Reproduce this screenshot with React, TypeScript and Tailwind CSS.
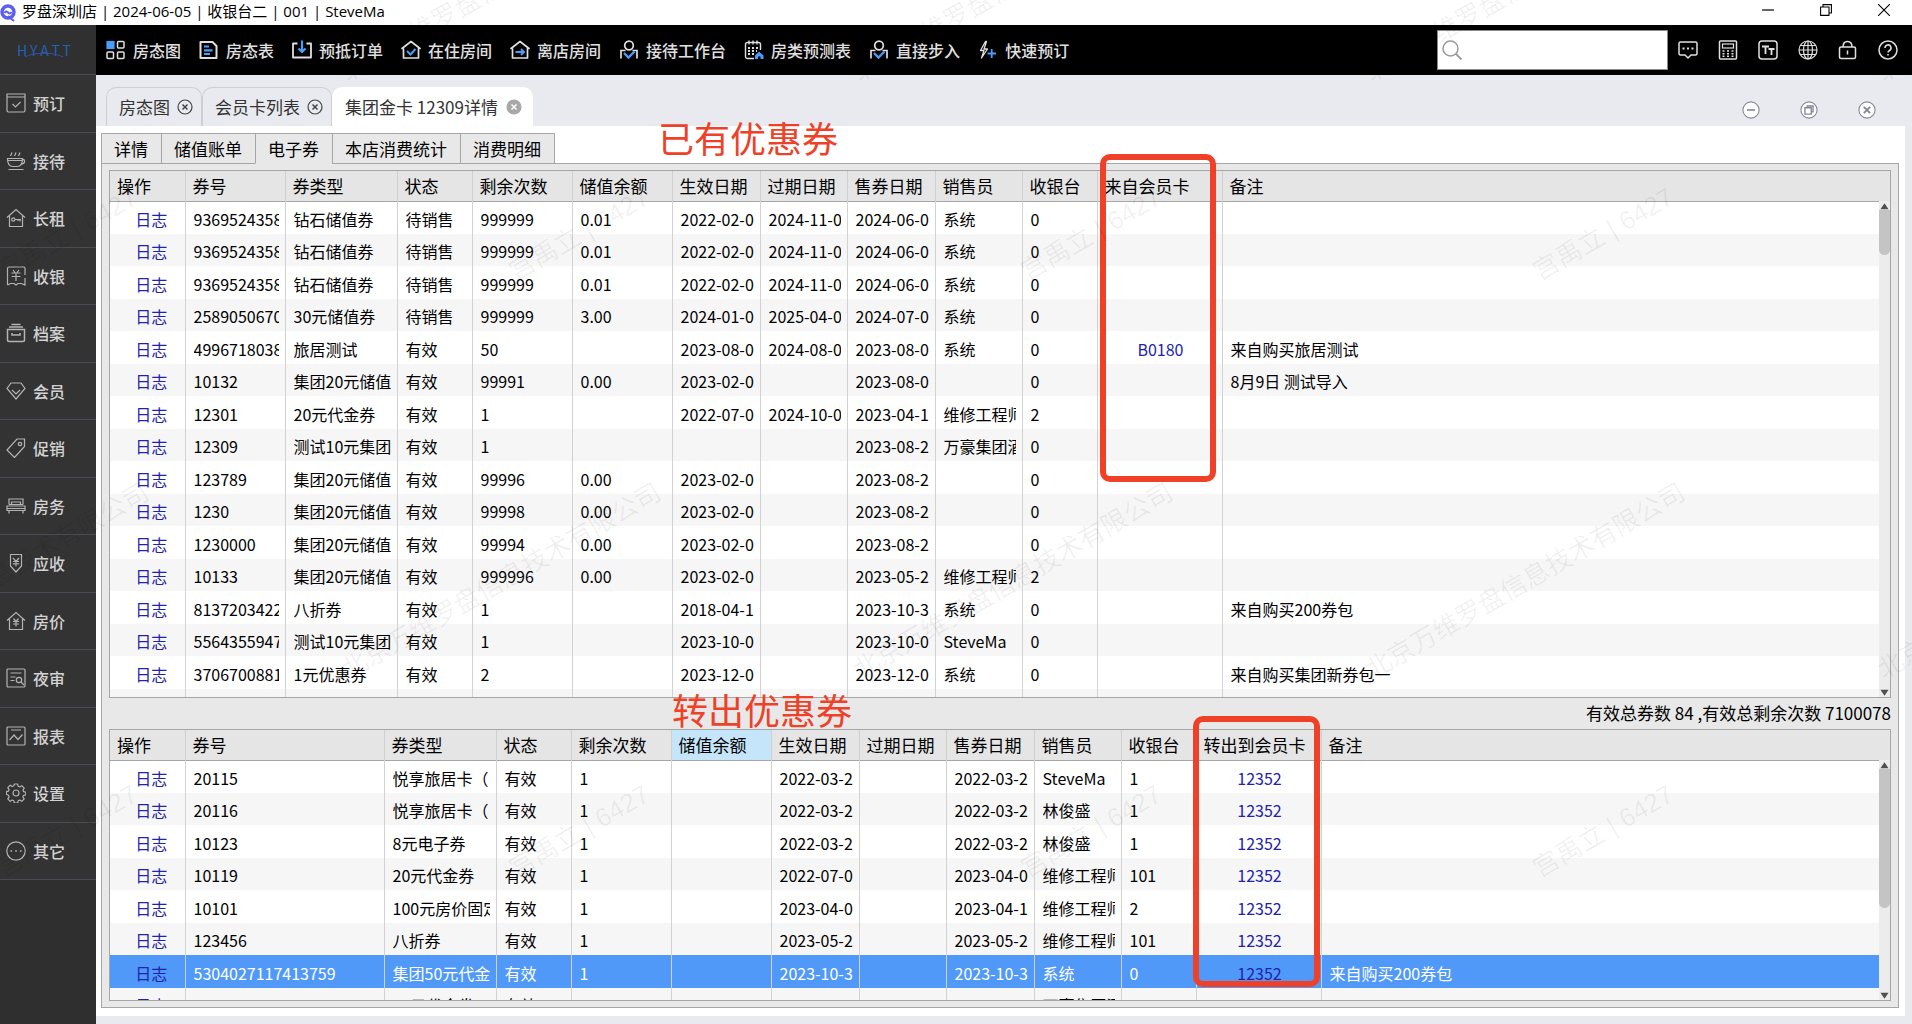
import type { ReactNode } from 'react'

const BLUE = '#4a9df8'

function Svg({ children, className = 'w-5 h-5' }: { children: ReactNode; className?: string }) {
  return (
    <svg viewBox="0 0 20 20" fill="none" stroke="currentColor" strokeWidth="1.2" aria-hidden="true"
      className={`shrink-0 ${className}`}>
      {children}
    </svg>
  )
}

const personIcon = (
  <>
    <circle cx="10" cy="5.500" r="4.300" strokeWidth="1.700" />
    <path d="M6.500 10.500H2v8M13.500 10.500H18v8" strokeWidth="1.700" />
    <path d="M5 13l4.500 4.500 6-6" stroke={BLUE} strokeWidth="2.400" />
  </>
)

const toolbar = [
  { label: '房态图', icon: <>
    <rect x="1" y="1.500" width="7" height="7" fill={BLUE} stroke={BLUE} />
    <rect x="11.500" y="1.500" width="6.500" height="6.500" rx="1" strokeWidth="1.5" />
    <rect x="1" y="12" width="6.500" height="6.500" rx="1" strokeWidth="1.5" />
    <rect x="11.500" y="12" width="6.500" height="6.500" rx="1" strokeWidth="1.5" />
  </> },
  { label: '房态表', icon: <>
    <path d="M1.500 2h12l4 4v12h-16z" strokeWidth="2" strokeLinejoin="round" />
    <path d="M5 6.500h5M5 10.300h8.500M5 14h6" stroke={BLUE} strokeWidth="2.200" />
  </> },
  { label: '预抵订单', icon: <>
    <path d="M5.500 3.500H1v14h18v-14h-4.500" strokeWidth="1.800" strokeLinejoin="round" />
    <path d="M10 0.500v11.500M6.500 8.500l3.500 3.500 3.500-3.500" stroke={BLUE} strokeWidth="2.200" />
  </> },
  { label: '在住房间', icon: <>
    <path d="M2.500 18V8.500H1L10 1.500l9 7h-1.500V18z" strokeWidth="1.700" strokeLinejoin="round" />
    <path d="M6 11l3.500 3.500 5-5.500" stroke={BLUE} strokeWidth="2" />
  </> },
  { label: '离店房间', icon: <>
    <path d="M2.500 18V8.500H1L10 1.500l9 7h-1.500V18z" strokeWidth="1.700" strokeLinejoin="round" />
    <path d="M5.500 12h8.500M11 9l3 3-3 3" stroke={BLUE} strokeWidth="2" />
  </> },
  { label: '接待工作台', icon: personIcon },
  { label: '房类预测表', icon: <>
    <path d="M10 18.500H3.500a2 2 0 0 1-2-2V4.500a2 2 0 0 1 2-2h11a2 2 0 0 1 2 2V10" strokeWidth="1.4" />
    <path d="M5 0.500v4M9 0.500v4M13 0.500v4" strokeWidth="1.4" />
    <path d="M4 8h2M8 8h2M12 8h2M4 11h2M8 11h2M12 11h1M4 14h2M8 14h2" strokeWidth="1.8" />
    <path d="M15 11.500l4.500 4V19h-3v-2.500h-2.500V19H11v-3.500z" fill={BLUE} stroke="none" />
  </> },
  { label: '直接步入', icon: personIcon },
  { label: '快速预订', icon: <>
    <path d="M7.500 1.500L2.500 10.500h3.500L3.500 18l6-9H6l2.500-7.500z" strokeWidth="1.3" strokeLinejoin="round" />
    <path d="M9.500 13.500h8.500M13.700 9v9" stroke={BLUE} strokeWidth="1.8" />
  </> },
]

const tools = [
  { label: '消息', icon: <>
    <path d="M2.500 2h15a1.500 1.500 0 0 1 1.500 1.500v10a1.500 1.500 0 0 1-1.500 1.500H13l-3 3-3-3H2.500A1.500 1.500 0 0 1 1 13.500v-10A1.500 1.500 0 0 1 2.500 2z" strokeWidth="1.5" />
    <path d="M4.500 8.500h2M9 8.500h2M13.500 8.500h2" strokeWidth="2" />
  </> },
  { label: '计算器', icon: <>
    <rect x="1.500" y="1" width="17" height="18" rx="1" strokeWidth="1.5" />
    <rect x="4.500" y="4" width="11" height="4" />
    <path d="M4.500 11h2M9 11h2M13.500 11h2M4.500 13.700h2M9 13.700h2M13.500 13.700h2M4.500 16.300h2M9 16.300h2M13.500 16.300h2" strokeWidth="1.500" />
  </> },
  { label: '字体', icon: <>
    <rect x="1" y="1" width="18" height="18" rx="3" strokeWidth="1.5" />
    <path d="M4 6.500h7M7.500 6.500v7.500M10.500 9h6M13.500 9v6" strokeWidth="1.800" />
  </> },
  { label: '语言', icon: <>
    <circle cx="10" cy="10" r="9" />
    <ellipse cx="10" cy="10" rx="4.500" ry="9" />
    <path d="M10 1v18M1 10h18M2.500 5.500h15M2.500 14.500h15" />
  </> },
  { label: '锁屏', icon: <>
    <rect x="1.500" y="7" width="16" height="11.500" rx="1.500" strokeWidth="1.5" />
    <path d="M5 7C5 3.500 7 1.500 9.500 1.500S14 3.500 14 7M9.500 10.500v4" strokeWidth="1.5" />
  </> },
  { label: '帮助', icon: <>
    <circle cx="10" cy="10" r="9" strokeWidth="1.5" />
    <path d="M7 8a3 3 0 1 1 4.500 2.500c-1 .6-1.500 1-1.500 2M10 14v1.500" strokeWidth="1.500" />
  </> },
]

const sidebar = [
  { label: '预订', icon: <path d="M1 1h18v16.500a1.500 1.500 0 0 1-1.500 1.500h-15A1.500 1.500 0 0 1 1 17.500zM1 4h18M6.500 11l3 3 5-5" /> },
  { label: '接待', icon: <path d="M6 1.500L4.500 5M10 1.500L8.500 5M14 1.500L12.500 5M1.500 7.500h15c0 5-2 8-5.500 8H7c-3.500 0-5.500-3-5.500-8zM2 9.500h14M16.500 8.500c3-.5 3 4.500-1.500 4.500M2.500 18.500h15" /> },
  { label: '长租', icon: <>
    <path d="M1 9.500l9-8 9 8M3.500 8v10.500h13V8" />
    <path d="M9 11.500h6M14 11.500v2M12 11.500v1.500" /><circle cx="7.300" cy="11.500" r="1.600" />
  </> },
  { label: '收银', icon: <path d="M1.500 19V2.500A1.500 1.500 0 0 1 3 1h14.500A1.500 1.500 0 0 1 19 2.500V9M19 12v7l-3.500-1.500H12l-2 1.500-2-1.500H4.500L1.500 19M7 4l2 2.500M13 4l-2 2.500M5.500 7h9M5.500 10.500h9M10 7v8" /> },
  { label: '档案', icon: <path d="M1.500 6.500h17V17a1.500 1.500 0 0 1-1.500 1.500H3A1.500 1.500 0 0 1 1.500 17zM3 4h14M5.500 1.500h9M6 10v2h8v-2" strokeWidth="1.500" /> },
  { label: '会员', icon: <path d="M5 2h10l4 5.500-9 10.500-9-10.500zM6 9l4 4 4-4" /> },
  { label: '促销', icon: <><path d="M11 1h7.500v7.500L8.500 19.500 1 12z" /><circle cx="14" cy="6" r="1.700" /></> },
  { label: '房务', icon: <path d="M3 8.500V3h14v5.500M1 14.500v-4.500h18v4.500zM3 14.500v3M17 14.500v3M5.500 8V6h9v2M1 12.500h18M3 8.500h14" /> },
  { label: '应收', icon: <path d="M4.500 1.500h11V13L10 19l-5.500-6zM7 5l3 3.500L13 5M7 8.500h6M7 10.800h6M10 8.500v5" /> },
  { label: '房价', icon: <path d="M1 9.500l9-8 9 8M3.500 8v10.500h13V8M7.500 7.500l2.500 3 2.500-3M7 10.500h6M7 13h6M10 10.500v5" /> },
  { label: '夜审', icon: <><rect x="1" y="1" width="18" height="18" rx="1" /><path d="M4.500 5h11M4.500 9h5M4.500 12.500h4M15 14l3 3" /><circle cx="13" cy="12" r="2.700" /></> },
  { label: '报表', icon: <><rect x="1" y="1" width="18" height="18" rx="1" /><path d="M5 4h10M3.500 14l4.500-5 4 4.500 4.500-5" /></> },
  { label: '设置', icon: <>
    <circle cx="10" cy="10" r="3" />
    <path d="M8.300 1h3.400l.5 2.300 1.600.7 2-1.300 2.400 2.400-1.300 2 .7 1.600 2.200.5v2.600l-2.200.5-.7 1.600 1.300 2-2.400 2.400-2-1.300-1.600.7-.5 2.300H8.300l-.5-2.300-1.600-.7-2 1.300-2.400-2.400 1.300-2-.7-1.600L.4 11.300V8.700l2-.5.700-1.600-1.300-2 2.400-2.400 2 1.300 1.600-.7z" strokeLinejoin="round" />
  </> },
  { label: '其它', icon: <><circle cx="10" cy="10" r="9.200" /><path d="M4.500 10h1.600M9.200 10h1.600M13.900 10h1.600" strokeWidth="1.600" /></> },
]

const subTabs = ['详情', '储值账单', '电子券', '本店消费统计', '消费明细']

type Col = { title: string; cls: string; link?: boolean; hot?: boolean }

const commonCols: Col[] = [
  { title: '券类型', cls: 'w-[112px]' },
  { title: '状态', cls: 'w-[75px]' },
  { title: '剩余次数', cls: 'w-[100px]' },
]

const dateCols: Col[] = [
  { title: '生效日期', cls: 'w-[88px]' },
  { title: '过期日期', cls: 'w-[87px]' },
  { title: '售券日期', cls: 'w-[88px]' },
  { title: '销售员', cls: 'w-[87px]' },
  { title: '收银台', cls: 'w-[75px]' },
]

const ownedCols: Col[] = [
  { title: '操作', cls: 'w-[75px]', link: true },
  { title: '券号', cls: 'w-[100px]' },
  ...commonCols,
  { title: '储值余额', cls: 'w-[100px]' },
  ...dateCols,
  { title: '来自会员卡', cls: 'w-[125px]', link: true },
  { title: '备注', cls: '' },
]

const movedCols: Col[] = [
  { title: '操作', cls: 'w-[75px]', link: true },
  { title: '券号', cls: 'w-[199px]' },
  ...commonCols,
  { title: '储值余额', cls: 'w-[100px]', hot: true },
  ...dateCols,
  { title: '转出到会员卡', cls: 'w-[125px]', link: true },
  { title: '备注', cls: '' },
]

const ownedRows = [
  ['日志', '93695243580', '钻石储值券', '待销售', '999999', '0.01', '2022-02-01', '2024-11-01', '2024-06-01', '系统', '0', '', ''],
  ['日志', '93695243580', '钻石储值券', '待销售', '999999', '0.01', '2022-02-01', '2024-11-01', '2024-06-01', '系统', '0', '', ''],
  ['日志', '93695243580', '钻石储值券', '待销售', '999999', '0.01', '2022-02-01', '2024-11-01', '2024-06-01', '系统', '0', '', ''],
  ['日志', '25890506700', '30元储值券', '待销售', '999999', '3.00', '2024-01-01', '2025-04-01', '2024-07-01', '系统', '0', '', ''],
  ['日志', '49967180380', '旅居测试', '有效', '50', '', '2023-08-01', '2024-08-01', '2023-08-01', '系统', '0', 'B0180', '来自购买旅居测试'],
  ['日志', '10132', '集团20元储值', '有效', '99991', '0.00', '2023-02-01', '', '2023-08-01', '', '0', '', '8月9日 测试导入'],
  ['日志', '12301', '20元代金券', '有效', '1', '', '2022-07-01', '2024-10-01', '2023-04-11', '维修工程师', '2', '', ''],
  ['日志', '12309', '测试10元集团', '有效', '1', '', '', '', '2023-08-21', '万豪集团酒', '0', '', ''],
  ['日志', '123789', '集团20元储值', '有效', '99996', '0.00', '2023-02-01', '', '2023-08-21', '', '0', '', ''],
  ['日志', '1230', '集团20元储值', '有效', '99998', '0.00', '2023-02-01', '', '2023-08-21', '', '0', '', ''],
  ['日志', '1230000', '集团20元储值', '有效', '99994', '0.00', '2023-02-01', '', '2023-08-21', '', '0', '', ''],
  ['日志', '10133', '集团20元储值', '有效', '999996', '0.00', '2023-02-01', '', '2023-05-21', '维修工程师', '2', '', ''],
  ['日志', '81372034220', '八折券', '有效', '1', '', '2018-04-11', '', '2023-10-31', '系统', '0', '', '来自购买200券包'],
  ['日志', '55643559470', '测试10元集团', '有效', '1', '', '2023-10-01', '', '2023-10-01', 'SteveMa', '0', '', ''],
  ['日志', '37067008810', '1元优惠券', '有效', '2', '', '2023-12-01', '', '2023-12-01', '系统', '0', '', '来自购买集团新券包一'],
  ['', '', '', '', '', '', '', '', '', '', '', '', ''],
]

const movedRows = [
  ['日志', '20115', '悦享旅居卡（', '有效', '1', '', '2022-03-21', '', '2022-03-21', 'SteveMa', '1', '12352', ''],
  ['日志', '20116', '悦享旅居卡（', '有效', '1', '', '2022-03-21', '', '2022-03-21', '林俊盛', '1', '12352', ''],
  ['日志', '10123', '8元电子券', '有效', '1', '', '2022-03-21', '', '2022-03-21', '林俊盛', '1', '12352', ''],
  ['日志', '10119', '20元代金券', '有效', '1', '', '2022-07-01', '', '2023-04-01', '维修工程师', '101', '12352', ''],
  ['日志', '10101', '100元房价固定', '有效', '1', '', '2023-04-01', '', '2023-04-11', '维修工程师', '2', '12352', ''],
  ['日志', '123456', '八折券', '有效', '1', '', '2023-05-21', '', '2023-05-21', '维修工程师', '101', '12352', ''],
  ['日志', '5304027117413759', '集团50元代金', '有效', '1', '', '2023-10-31', '', '2023-10-31', '系统', '0', '12352', '来自购买200券包'],
  ['日志', '', '20元代金券', '有效', '', '', '', '', '', '万豪集团酒', '', '', ''],
]

const COL_STEP = 512
const ROW_STEP = 597

function Watermarks() {
  const marks = []
  for (let row = 0; row < 2; row++) {
    for (let col = 0; col < 5; col++) {
      marks.push({ text: '宫禹立 | 6427', x: 67 + col * COL_STEP, y: 234 + row * ROW_STEP })
      marks.push({ text: '北京万维罗盘信息技术有限公司', x: col * COL_STEP - 11, y: row * ROW_STEP - 16 })
    }
  }
  return (
    <div className="absolute inset-0 overflow-hidden pointer-events-none select-none" aria-hidden="true">
      {marks.map(m => (
        <span key={`${m.x},${m.y}`} style={{ left: m.x, top: m.y }}
          className="absolute -translate-x-1/2 -translate-y-1/2 -rotate-30 whitespace-nowrap text-[26px] leading-8 text-black/6 font-['Liberation_Sans','Noto_Sans_CJK_SC',sans-serif]">
          {m.text}
        </span>
      ))}
    </div>
  )
}

function CouponTable({ cols, rows, selected, thumb }: { cols: Col[]; rows: string[][]; selected?: number; thumb: string }) {
  return (
    <div className="relative h-full overflow-hidden border border-[#a6a6a6] bg-white">
      <table className="w-full table-fixed border-collapse text-base">
        <thead>
          <tr className="h-[30px] bg-[#e5e5e5] text-[17px] leading-6 border-b border-[#a6a6a6]">
            {cols.map(c => (
              <th key={c.title} scope="col"
                className={`${c.cls} ${c.hot ? 'bg-[#c5e6fa]' : ''} p-0 pl-[7px] text-left font-normal whitespace-nowrap border-r border-[#cfcfcf] last:border-r-0`}>
                {c.title}
              </th>
            ))}
          </tr>
        </thead>
        <tbody>
          {rows.map((row, i) => (
            <tr key={i}
              className={`h-[33px] even:h-8 ${i === selected ? 'bg-[#5099f8] text-white' : 'bg-white even:bg-[#f6f6f6]'}`}>
              {row.map((cell, j) => (
                <td key={j} className="p-0 pl-2 pr-[6px] pt-[2px] first:pl-3 first:pr-1 border-r border-[#d2d2d2] last:border-r-0">
                  <div className={`overflow-hidden whitespace-nowrap leading-6 ${cols[j].link ? 'text-center' : ''}`}>
                    {cols[j].link && cell ? <a href="#" className="text-[#2222ac]">{cell}</a> : cell}
                  </div>
                </td>
              ))}
            </tr>
          ))}
        </tbody>
      </table>
      <div className="absolute right-0 top-[30px] bottom-0 w-[11px] flex flex-col items-center pt-px bg-[#ececec]">
        <svg viewBox="0 0 10 8" className="w-[9px] h-2 shrink-0" aria-hidden="true"><path d="M5 1l4.500 6.500H.5z" fill="#505050" /></svg>
        <div className="flex-1 w-full"><div className={`${thumb} w-full rounded-b-md bg-[#c4c4c4]`} /></div>
        <svg viewBox="0 0 10 8" className="w-[9px] h-2 shrink-0" aria-hidden="true"><path d="M5 7L.5.500h9z" fill="#505050" /></svg>
      </div>
    </div>
  )
}

function DocTab({ label, active = false }: { label: string; active?: boolean }) {
  return (
    <div className={`h-[39px] flex items-center pl-3 rounded-t-[10px] border border-b-0 text-[17px] leading-6 text-[#333] ${active ? 'gap-2 pr-[10px] bg-white border-white' : 'gap-[7px] pr-2 bg-[#e9eaf0] border-[#cfcfd2]'}`}>
      <a href="#" className="whitespace-nowrap">{label}</a>
      <button type="button" aria-label={`关闭${label}`}>
        <svg viewBox="0 0 16 16" className="w-4 h-4" aria-hidden="true">
          <circle cx="8" cy="8" r="7" fill={active ? '#a8a8a8' : 'none'} stroke={active ? '#a8a8a8' : '#444'} strokeWidth="1.2" />
          <path d="M5.500 5.500l5 5M10.500 5.500l-5 5" stroke={active ? '#fff' : '#444'} strokeWidth="1.5" />
        </svg>
      </button>
    </div>
  )
}

export default function App() {
  return (
    <div className="relative h-screen flex flex-col overflow-hidden bg-[#e9eaf0] text-black font-['Noto_Sans_CJK_SC',sans-serif]">
      <header className="h-[25px] shrink-0 flex items-center bg-white">
        <svg viewBox="0 0 16 18" className="w-4 h-[18px] shrink-0" aria-hidden="true">
          <circle cx="8" cy="8" r="6" fill="none" stroke="#5a5ff0" strokeWidth="3.500" />
          <path d="M4.500 9c1-2 2-2 3.500-.5s2.500 1 3.500-.5M8 12l6 5" fill="none" stroke="#5a5ff0" strokeWidth="2" />
        </svg>
        <h1 className="ml-[6px] mb-1 text-[15px] leading-5 whitespace-nowrap font-['Open_Sans','Noto_Sans_CJK_SC',sans-serif]">
          罗盘深圳店 | 2024-06-05 | 收银台二 | 001 | SteveMa
        </h1>
        <div className="ml-auto mr-[22px] mb-[5px] flex gap-[46px] text-black">
          <button type="button" aria-label="最小化"><Svg className="w-3 h-3"><path d="M0 10h20" strokeWidth="2" /></Svg></button>
          <button type="button" aria-label="还原"><Svg className="w-3 h-3"><path d="M1 5h14v14H1zM5 5V1h14v14h-4" strokeWidth="1.800" /></Svg></button>
          <button type="button" aria-label="关闭"><Svg className="w-3 h-3"><path d="M0 0l20 20M20 0L0 20" strokeWidth="1.800" /></Svg></button>
        </div>
      </header>

      <div className="flex-1 min-h-0 flex">
        <aside className="w-24 shrink-0 bg-[#2f2f2f]">
          <div className="h-[50px] flex flex-col items-center justify-center pr-2 bg-[#303030] border-b border-[#4a4b55] text-[#1f63b5]">
            <div className="w-[54px] flex justify-between text-[14px] leading-4">
              {['H', 'Y', 'A', 'T', 'T'].map((c, i) => <span key={i}>{c}</span>)}
            </div>
            <svg viewBox="0 0 40 6" className="w-10 h-[6px] -mt-[6px]" aria-hidden="true">
              <path d="M1 5C10 0 30 0 39 5" fill="none" stroke="#3a4a9e" strokeWidth="1.200" />
            </svg>
          </div>
          <nav className="h-[805px] grid auto-rows-fr bg-[#333]">
            {sidebar.map(s => (
              <a key={s.label} href="#"
                className="flex items-center gap-[7px] pl-[6px] border-b border-[#4a4b55] text-base leading-6 font-medium text-[#d2d2d2]">
                <Svg className="w-5 h-5 text-[#b4b4b4]">{s.icon}</Svg>
                {s.label}
              </a>
            ))}
          </nav>
        </aside>

        <div className="flex-1 min-w-0 flex flex-col">
          <div className="h-[50px] shrink-0 flex items-center pl-[10px] pr-[14px] bg-black text-[#e0e0e0]">
            <nav className="flex gap-[18px]">
              {toolbar.map(t => (
                <a key={t.label} href="#" className="flex items-center gap-[7px] text-base leading-6 font-medium whitespace-nowrap">
                  <Svg>{t.icon}</Svg>
                  {t.label}
                </a>
              ))}
            </nav>
            <label className="ml-auto w-[231px] h-10 shrink-0 flex items-center pl-1 bg-white border border-[#8a8a8a] text-[#999]">
              <Svg><circle cx="8.500" cy="8.500" r="7.500" strokeWidth="1.500" /><path d="M14 14l5.500 5.500" strokeWidth="1.800" /></Svg>
              <input type="text" aria-label="搜索" className="w-full px-1 outline-none text-black" />
            </label>
            <div className="ml-[10px] flex gap-5">
              {tools.map(t => <button key={t.label} type="button" aria-label={t.label}><Svg>{t.icon}</Svg></button>)}
            </div>
          </div>

          <div className="h-[51px] shrink-0 flex items-end pl-[10px]">
            <DocTab label="房态图" />
            <DocTab label="会员卡列表" />
            <DocTab label="集团金卡 12309详情" active />
            <div className="ml-auto mr-9 mb-[7px] flex gap-10 text-[#85879a]">
              <button type="button" aria-label="最小化窗口"><Svg className="w-[18px] h-[18px]"><circle cx="10" cy="10" r="9" fill="#fff" /><path d="M5.500 10h9" strokeWidth="1.800" /></Svg></button>
              <button type="button" aria-label="还原窗口"><Svg className="w-[18px] h-[18px]"><circle cx="10" cy="10" r="9" fill="#fff" /><path d="M5.500 7.500h7v7h-7zM8 7V5.500h6.500V12H13" strokeWidth="1.500" /></Svg></button>
              <button type="button" aria-label="关闭窗口"><Svg className="w-[18px] h-[18px]"><circle cx="10" cy="10" r="9" fill="#fff" /><path d="M6.500 6.500l7 7M13.500 6.500l-7 7" strokeWidth="2.200" /></Svg></button>
            </div>
          </div>

          <main className="relative flex-1 min-h-0 mr-[7px] mb-2 pt-[7px] pb-2 pl-[5px] pr-[6px] flex flex-col bg-white">
            <div className="relative z-10 flex -mb-px">
              {subTabs.map(t => (
                <button key={t} type="button"
                  className={`h-[31px] pl-3 pr-[13px] text-[17px] leading-6 border border-r-0 last:border-r border-[#a6a6a6] bg-[#e8e8e8] whitespace-nowrap ${t === '电子券' ? 'border-b-[#e8e8e8]' : ''}`}>
                  {t}
                </button>
              ))}
            </div>
            <div className="flex-1 min-h-0 flex flex-col px-[7px] pt-[6px] pb-[6px] bg-[#e8e8e8] border border-[#a6a6a6]">
              <section className="relative flex-1 min-h-0">
                <CouponTable cols={ownedCols} rows={ownedRows} thumb="h-[45px]" />
                <h2 className="absolute -top-[59px] left-[549px] z-10 text-4xl leading-[52px] text-[#ee4127] whitespace-nowrap">已有优惠券</h2>
                <div className="absolute -top-4 left-[991px] w-[116px] h-[328px] border-[6px] border-[#ee4127] rounded-[10px]" />
              </section>
              <p className="h-[31px] text-right text-[17px] leading-[30px]">有效总券数 84 ,有效总剩余次数 7100078</p>
              <section className="relative h-[272px] shrink-0">
                <CouponTable cols={movedCols} rows={movedRows} selected={6} thumb="h-[139px]" />
                <h2 className="absolute -top-[46px] left-[563px] text-4xl leading-[52px] text-[#ee4127] whitespace-nowrap">转出优惠券</h2>
                <div className="absolute -top-[13px] left-[1084px] w-[127px] h-[271px] border-[6px] border-[#ee4127] rounded-[10px]" />
              </section>
            </div>
          </main>
        </div>
      </div>

      <Watermarks />
    </div>
  )
}
